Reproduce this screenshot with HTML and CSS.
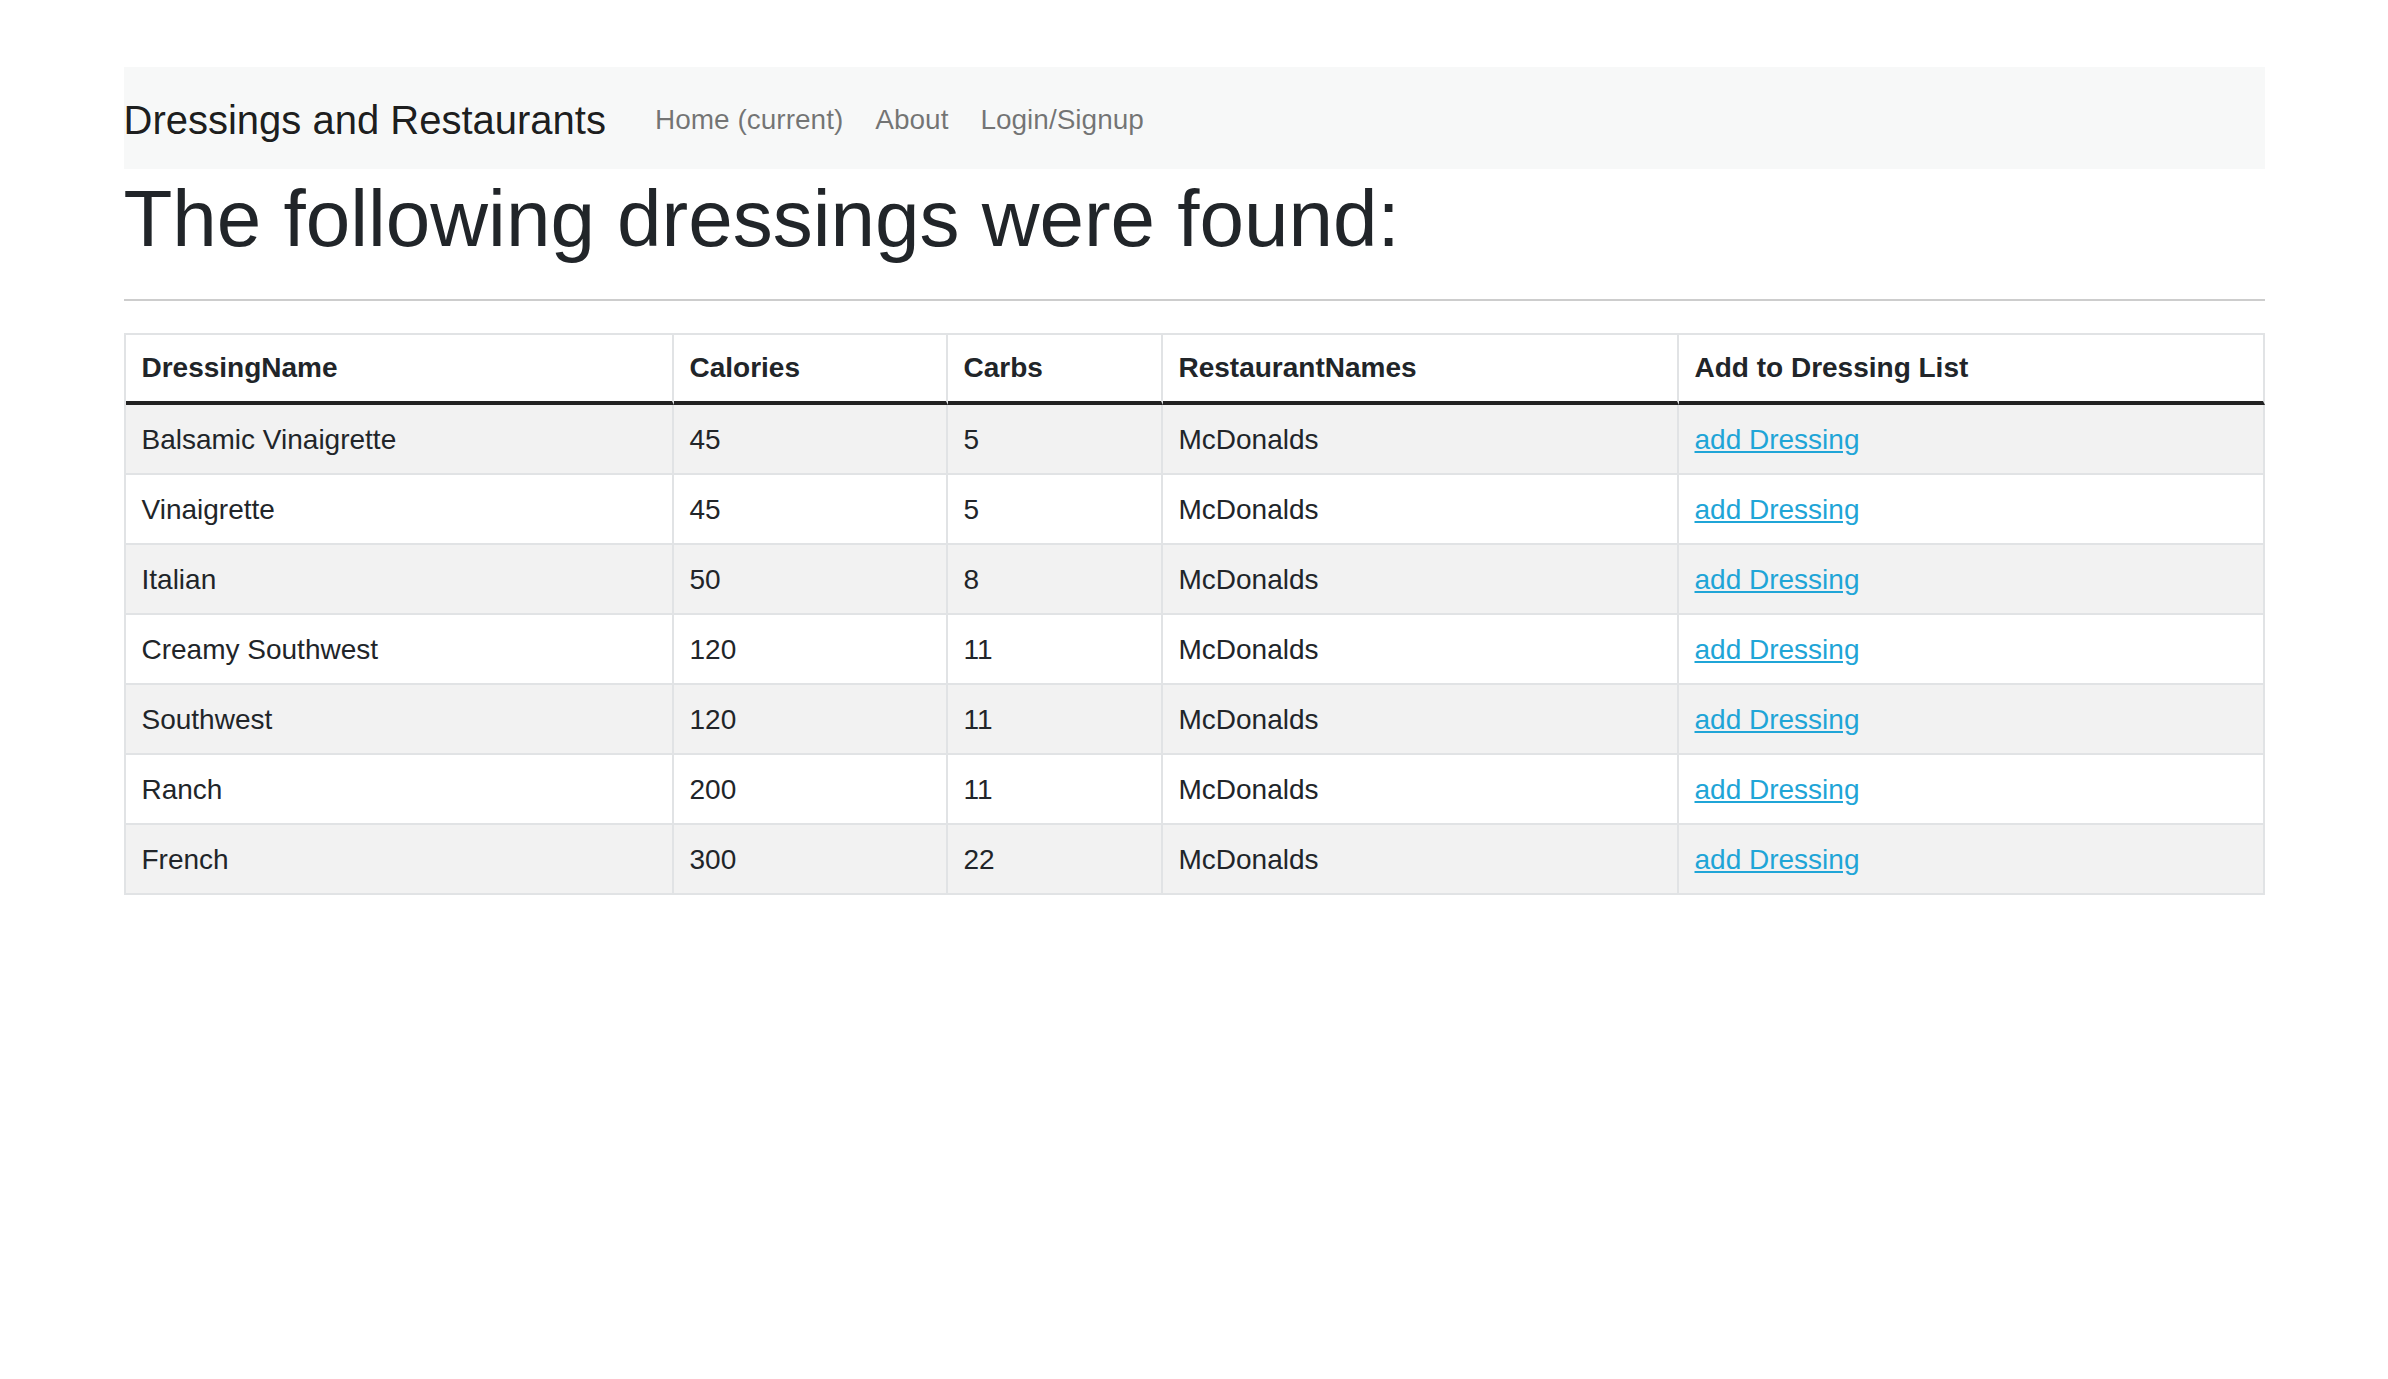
FILE: index.html
```html
<!DOCTYPE html>
<html lang="en">
<head>
<meta charset="utf-8">
<title>Dressings and Restaurants</title>
<link rel="stylesheet" href="styles.css">
</head>
<body>
<div class="container">
  <nav class="navbar">
    <a class="brand" href="#">Dressings and Restaurants</a>
    <ul class="nav">
      <li><a class="nav-link" href="#">Home (current)</a></li>
      <li><a class="nav-link" href="#">About</a></li>
      <li><a class="nav-link" href="#">Login/Signup</a></li>
    </ul>
  </nav>
  <h1 class="title">The following dressings were found:</h1>
  <hr class="rule">
  <table class="table">
    <thead>
      <tr>
        <th class="c1">DressingName</th>
        <th class="c2">Calories</th>
        <th class="c3">Carbs</th>
        <th class="c4">RestaurantNames</th>
        <th class="c5">Add to Dressing List</th>
      </tr>
    </thead>
    <tbody>
      <tr><td>Balsamic Vinaigrette</td><td>45</td><td>5</td><td>McDonalds</td><td><a href="#">add Dressing</a></td></tr>
      <tr><td>Vinaigrette</td><td>45</td><td>5</td><td>McDonalds</td><td><a href="#">add Dressing</a></td></tr>
      <tr><td>Italian</td><td>50</td><td>8</td><td>McDonalds</td><td><a href="#">add Dressing</a></td></tr>
      <tr><td>Creamy Southwest</td><td>120</td><td>11</td><td>McDonalds</td><td><a href="#">add Dressing</a></td></tr>
      <tr><td>Southwest</td><td>120</td><td>11</td><td>McDonalds</td><td><a href="#">add Dressing</a></td></tr>
      <tr><td>Ranch</td><td>200</td><td>11</td><td>McDonalds</td><td><a href="#">add Dressing</a></td></tr>
      <tr><td>French</td><td>300</td><td>22</td><td>McDonalds</td><td><a href="#">add Dressing</a></td></tr>
    </tbody>
  </table>
</div>
</body>
</html>
```
FILE: styles.css
```css
* { box-sizing: border-box; }
html, body { margin: 0; padding: 0; background: #fff; }
body {
  font-family: "Liberation Sans", Arial, sans-serif;
  font-size: 28px;
  line-height: 1.5;
  color: #212529;
}
.container {
  width: 2141px;
  margin: 0 auto;
  padding-top: 67px;
}
.navbar {
  display: flex;
  align-items: center;
  background: #f7f8f8;
  padding: 23px 0 19px 0;
}
.brand {
  font-size: 40px;
  line-height: 60px;
  color: rgba(0, 0, 0, 0.9);
  text-decoration: none;
  margin-right: 33px;
}
.nav {
  display: flex;
  list-style: none;
  margin: 0;
  padding: 0;
}
.nav-link {
  display: block;
  padding: 0 16px;
  line-height: 42px;
  color: rgba(0, 0, 0, 0.54);
  text-decoration: none;
}
.title {
  font-size: 80px;
  font-weight: 400;
  line-height: 96px;
  margin: 2px 0 0 0;
  color: #212529;
}
.rule {
  margin: 32px 0 0 0;
  border: 0;
  height: 2px;
  background: #cdcdcd;
}
.table {
  margin-top: 32px;
  width: 100%;
  table-layout: fixed;
  border-collapse: separate;
  border-spacing: 0;
  border-top: 2px solid #e1e3e5;
  border-left: 2px solid #e1e3e5;
}
.table th, .table td {
  text-align: left;
  padding: 14px 16px 12px 16px;
  border-right: 2px solid #e1e3e5;
  border-bottom: 2px solid #e1e3e5;
  line-height: 42px;
  vertical-align: middle;
}
.table th {
  font-weight: 700;
  padding: 13px 16px 13px 16px;
  line-height: 40px;
  border-bottom: 4px solid #222;
}
.c1 { width: 548px; }
.c2 { width: 274px; }
.c3 { width: 215px; }
.c4 { width: 516px; }
.table tbody tr:nth-child(odd) td { background: #f2f2f2; }
.table a {
  color: #1fa5d7;
  text-decoration: underline;
}
```
